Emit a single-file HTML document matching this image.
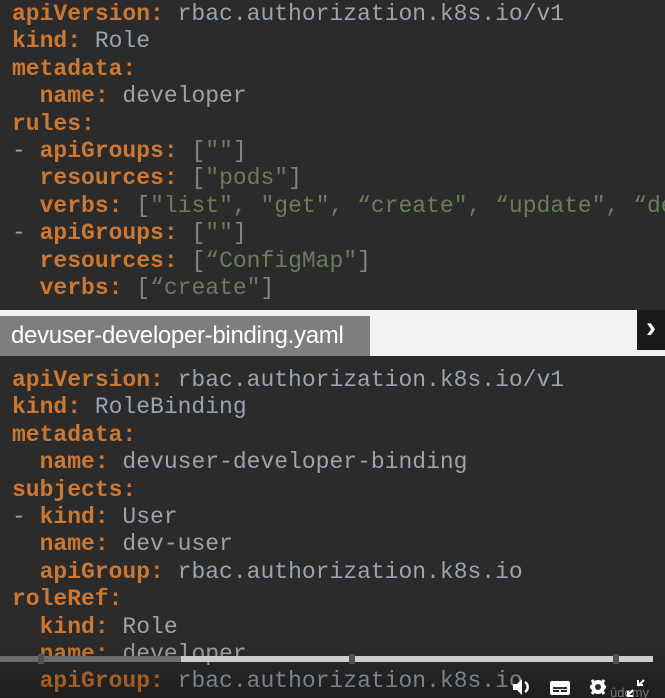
<!DOCTYPE html>
<html><head><meta charset="utf-8"><style>
html,body{margin:0;padding:0}
body{width:665px;height:698px;overflow:hidden;background:#2b2b2b;position:relative}
.code{position:absolute;left:12px;font-family:"Liberation Mono","Courier New",Courier,monospace;font-size:23px;line-height:27.4px;white-space:pre;color:#9aa4b0;margin:0}
.k{color:#cc7832;font-weight:bold}
.s{color:#6a7d5c}
.b{color:#7f858a}
.band{position:absolute;left:0;top:310px;width:665px;height:46px;background:#f2f2f2}
.tab{position:absolute;left:0;top:316px;width:370px;height:40px;background:#7e7e7e;color:#fff;font-family:"Liberation Sans",sans-serif;font-size:24px;letter-spacing:-0.3px;line-height:40px;padding-left:11px;box-sizing:border-box;white-space:nowrap}
.arr{position:absolute;left:637px;top:310px;width:28px;height:40px;background:#1a1a1a;color:#fff;font-family:"Liberation Sans",sans-serif;font-size:30px;line-height:36px;text-align:center;font-weight:bold}
.shade{position:absolute;left:0;top:640px;width:665px;height:58px;background:linear-gradient(rgba(0,0,0,0),rgba(0,0,0,0.3))}
.bar{position:absolute;top:656px;height:6px}
.mk{position:absolute;top:654px;width:6px;height:10px;background:#4b5258}
.clip1{position:absolute;left:0;top:0;width:665px;height:310px;overflow:hidden}
</style></head><body>
<div class="clip1"><div class="code" style="top:1px"><span class="k">apiVersion:</span> rbac.authorization.k8s.io/v1
<span class="k">kind:</span> Role
<span class="k">metadata:</span>
  <span class="k">name:</span> developer
<span class="k">rules:</span>
- <span class="k">apiGroups:</span> <span class="b">[</span><span class="s">""</span><span class="b">]</span>
  <span class="k">resources:</span> <span class="b">[</span><span class="s">"pods"</span><span class="b">]</span>
  <span class="k">verbs:</span> <span class="b">[</span><span class="s">"list", "get", “create", “update", “de</span>
- <span class="k">apiGroups:</span> <span class="b">[</span><span class="s">""</span><span class="b">]</span>
  <span class="k">resources:</span> <span class="b">[</span><span class="s">“ConfigMap"</span><span class="b">]</span>
  <span class="k">verbs:</span> <span class="b">[</span><span class="s">“create"</span><span class="b">]</span></div></div>
<div class="band"></div>
<div class="tab">devuser-developer-binding.yaml</div>
<div class="arr">›</div>
<div class="code" style="top:367px"><span class="k">apiVersion:</span> rbac.authorization.k8s.io/v1
<span class="k">kind:</span> RoleBinding
<span class="k">metadata:</span>
  <span class="k">name:</span> devuser-developer-binding
<span class="k">subjects:</span>
- <span class="k">kind:</span> User
  <span class="k">name:</span> dev-user
  <span class="k">apiGroup:</span> rbac.authorization.k8s.io
<span class="k">roleRef:</span>
  <span class="k">kind:</span> Role
  <span class="k">name:</span> developer
  <span class="k">apiGroup:</span> rbac.authorization.k8s.io</div>
<div class="shade"></div>
<div class="bar" style="left:0;width:181px;background:#676d71"></div>
<div class="bar" style="left:181px;width:472px;background:#cbcdcb"></div>
<div class="mk" style="left:38px"></div>
<div class="mk" style="left:349px"></div>
<div class="mk" style="left:613px"></div>
<svg style="position:absolute;left:510px;top:676px" width="155" height="22" viewBox="0 0 155 22">
<path d="M3 8h4l5-5v16l-5-5H3z" fill="#fff"/><path d="M15 6a6 6 0 0 1 0 10" stroke="#fff" stroke-width="2.5" fill="none"/>
<rect x="40" y="5" width="20" height="14" rx="2" fill="#fff"/><rect x="43" y="11" width="14" height="2" fill="#2b2b2b"/><rect x="43" y="14" width="6" height="2" fill="#2b2b2b"/><rect x="51" y="14" width="6" height="2" fill="#2b2b2b"/>
<circle cx="88" cy="11" r="7" fill="#fff"/><circle cx="88" cy="11" r="3" fill="#2b2b2b"/>
<path d="M82 4l2 3M94 4l-2 3M82 18l2-3M94 18l-2-3M80 11h3M96 11h-3" stroke="#fff" stroke-width="3"/>
<text x="100" y="21" font-family="Liberation Sans" font-size="13" fill="#777">ûdemy</text>
<path d="M117 20l6-6M118 15v5h5M134 4l-6 6M133 9h-5V4" stroke="#fff" stroke-width="2" fill="none"/>
</svg>
</body></html>
